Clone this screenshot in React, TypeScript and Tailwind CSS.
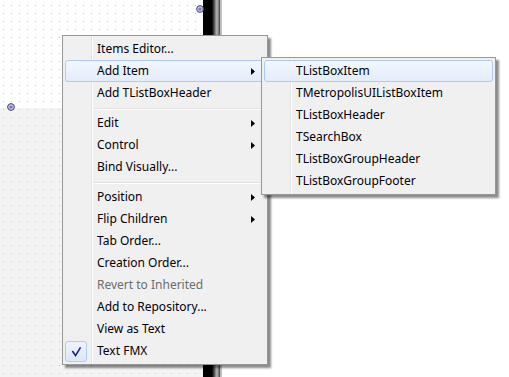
import React from 'react';

interface MenuEntry {
  label?: string;
  separator?: boolean;
  arrow?: boolean;
  disabled?: boolean;
  active?: boolean;
  checked?: boolean;
}

const mainItems: MenuEntry[] = [
  { label: 'Items Editor...' },
  { label: 'Add Item', arrow: true, active: true },
  { label: 'Add TListBoxHeader' },
  { separator: true },
  { label: 'Edit', arrow: true },
  { label: 'Control', arrow: true },
  { label: 'Bind Visually...' },
  { separator: true },
  { label: 'Position', arrow: true },
  { label: 'Flip Children', arrow: true },
  { label: 'Tab Order...' },
  { label: 'Creation Order...' },
  { label: 'Revert to Inherited', disabled: true },
  { label: 'Add to Repository...' },
  { label: 'View as Text' },
  { label: 'Text FMX', checked: true },
];

const subItems: MenuEntry[] = [
  { label: 'TListBoxItem', active: true },
  { label: 'TMetropolisUIListBoxItem' },
  { label: 'TListBoxHeader' },
  { label: 'TSearchBox' },
  { label: 'TListBoxGroupHeader' },
  { label: 'TListBoxGroupFooter' },
];

function Handle() {
  return (
    <svg width="8" height="8" viewBox="0 0 8 8">
      <circle cx="4" cy="4" r="3.4" fill="#c4c4ee" stroke="#4a4a58" strokeWidth="1" />
      <circle cx="4" cy="4" r="1.6" fill="#7676cc" />
    </svg>
  );
}

function MenuItem({ item }: { item: MenuEntry }) {
  if (item.separator) {
    return (
      <div className="h-[8px] pt-[4px] pl-[29px] pr-[4px]">
        <div className="h-[1px] bg-[#e0e0e0]" />
        <div className="h-[1px] bg-white" />
      </div>
    );
  }
  return (
    <div
      className={`relative flex h-[22px] items-center rounded-[3px] border pl-[31px] pr-[9px] ${
        item.active
          ? 'border-[#aecbf2] bg-[linear-gradient(to_bottom,#f2f7fe,#e3ecfa)]'
          : 'border-transparent'
      }`}
    >
      {item.checked && (
        <div className="absolute left-[-1px] top-[0px] flex h-[21px] w-[22px] items-center justify-center rounded-[3px] border border-[#aecbf2] bg-[linear-gradient(to_bottom,#eef4fd,#dde8f8)]">
          <svg width="22" height="21" viewBox="0 0 22 21">
            <polyline
              points="7,10 10.5,15 16,6"
              fill="none"
              stroke="#1f1f9a"
              strokeWidth="1.8"
              strokeLinejoin="miter"
            />
          </svg>
        </div>
      )}
      <span
        className={`flex-1 whitespace-nowrap ${item.disabled ? 'text-[#6d6d6d]' : 'text-[#000008]'}`}
      >
        {item.label}
      </span>
      {item.arrow && (
        <svg width="4" height="7" viewBox="0 0 4 7">
          <polygon points="0,0 4,3.5 0,7" fill="#000" />
        </svg>
      )}
    </div>
  );
}

function Menu({ items, className }: { items: MenuEntry[]; className: string }) {
  return (
    <div
      className={`absolute border border-[#979797] p-[2px] shadow-[3px_3px_2px_rgba(0,0,0,0.45)] bg-[linear-gradient(to_right,#f0f0f0_28px,#e2e3e3_28px,#e2e3e3_29px,#ffffff_29px,#ffffff_30px,#f0f0f0_30px)] ${className}`}
    >
      {items.map((item, i) => (
        <MenuItem key={i} item={item} />
      ))}
    </div>
  );
}

export default function App() {
  return (
    <div className="relative flex h-[377px] w-[509px] overflow-hidden bg-white font-['Noto_Sans',sans-serif] text-[12px] leading-none">
      <div className="flex w-[203px] flex-col">
        <div className="h-[108px] bg-[#c4c4c4] bg-[linear-gradient(to_right,transparent_1px,#ffffff_1px),linear-gradient(to_bottom,transparent_1px,#ffffff_1px)] bg-[size:8px_8px] bg-[position:3px_5px]" />
        <div className="flex-1 bg-[#c8c8c8] bg-[linear-gradient(to_right,transparent_1px,#f3f3f3_1px),linear-gradient(to_bottom,transparent_1px,#f3f3f3_1px)] bg-[size:8px_8px] bg-[position:3px_1px]" />
      </div>
      <div className="w-[19px] bg-[linear-gradient(to_right,#000000_9px,#6a6a6a_12px,#a8a8a8_13px,#a0a0a0_15px,#5a5a5a_16px,#505050_17px,#b8b8b8_17px,#c4c4c4_19px)]" />
      <div className="flex-1 bg-white" />

      <div className="absolute left-[196px] top-[5px]">
        <Handle />
      </div>
      <div className="absolute left-[7px] top-[103px]">
        <Handle />
      </div>

      <Menu items={mainItems} className="left-[62px] top-[35px] w-[206px]" />
      <Menu items={subItems} className="left-[261px] top-[57px] w-[235px]" />
    </div>
  );
}
